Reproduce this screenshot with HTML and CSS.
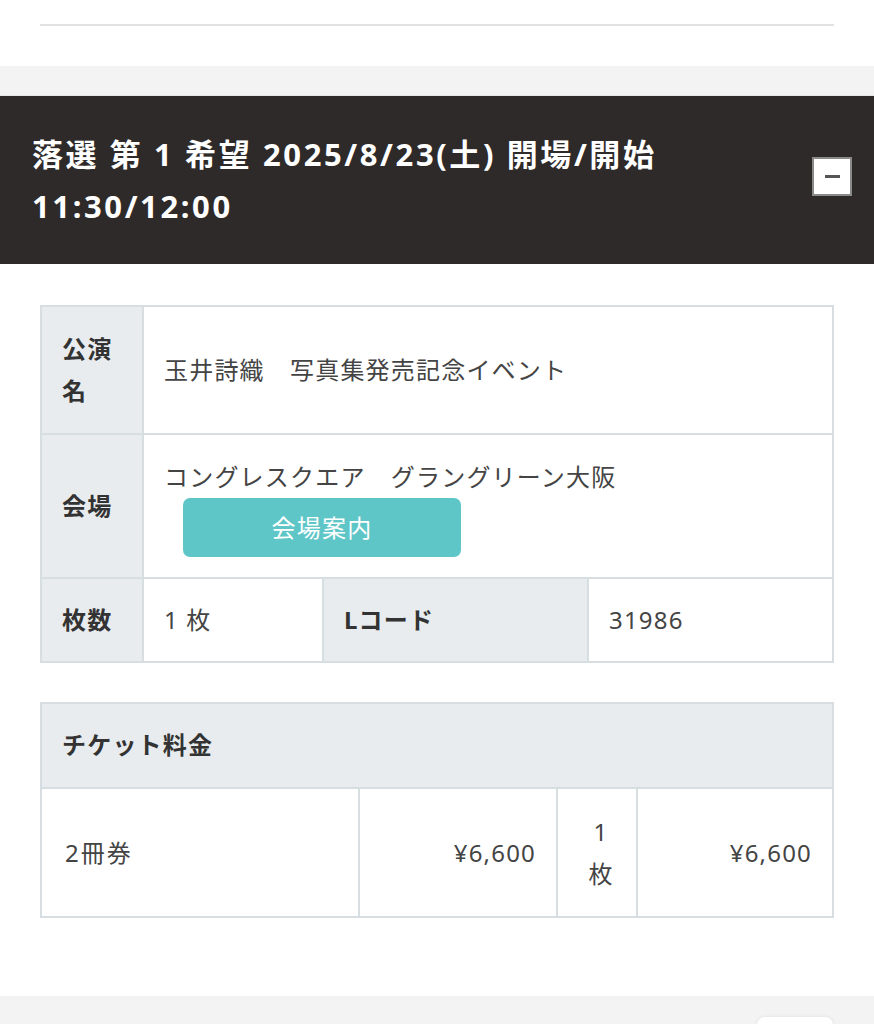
FILE: index.html
```html
<!DOCTYPE html>
<html lang="ja">
<head>
  <meta charset="UTF-8" />
  <meta name="viewport" content="width=device-width, initial-scale=1.0"/>
  <title>抽選結果</title>
  <link rel="stylesheet" href="styles.css">
</head>
<body>
  <div class="top-area">
    <hr class="top-line">
  </div>
  <div class="gray-gap"></div>

  <section class="lottery">
    <div class="lottery-head">
      <h2 class="lottery-title">落選 第 1 希望 2025/8/23(土) 開場/開始 11:30/12:00</h2>
      <button class="toggle-btn" type="button" aria-label="閉じる"><span class="toggle-bar"></span></button>
    </div>

    <div class="lottery-body">
      <table class="info-table">
        <colgroup>
          <col style="width:102px">
          <col style="width:180px">
          <col style="width:265px">
          <col>
        </colgroup>
        <tr class="row-name">
          <th>公演<br>名</th>
          <td colspan="3">玉井詩織　写真集発売記念イベント</td>
        </tr>
        <tr class="row-venue">
          <th>会場</th>
          <td colspan="3">
            コングレスクエア　グラングリーン大阪
            <a class="venue-btn" href="#">会場案内</a>
          </td>
        </tr>
        <tr class="row-count">
          <th>枚数</th>
          <td>1 枚</td>
          <th>Lコード</th>
          <td>31986</td>
        </tr>
      </table>

      <table class="price-table">
        <colgroup>
          <col style="width:318px">
          <col style="width:198px">
          <col style="width:80px">
          <col>
        </colgroup>
        <tr>
          <th colspan="4">チケット料金</th>
        </tr>
        <tr>
          <td class="kind">2冊券</td>
          <td class="num">¥6,600</td>
          <td class="qty">1<br>枚</td>
          <td class="num">¥6,600</td>
        </tr>
      </table>
    </div>
  </section>

  <div class="bottom-bar">
    <span class="bottom-btn"></span>
  </div>
</body>
</html>
```

FILE: styles.css
```css
body {
  font-family: "Noto Sans", "Noto Sans CJK JP", sans-serif;
  background-color: #fff;
  margin: 0;
  padding: 0;
  color: #444;
}

.top-area {
  height: 66px;
  padding: 24px 40px 0;
  box-sizing: border-box;
}

.top-line {
  margin: 0;
  border: none;
  border-top: 2px solid #e2e2e2;
}

.gray-gap {
  height: 29px;
  background-color: #f3f3f3;
  border-bottom: 1px solid #e6e6e6;
}

.lottery-head {
  display: flex;
  align-items: center;
  justify-content: space-between;
  background-color: #2e2a29;
  height: 168px;
  box-sizing: border-box;
  padding: 0 22px 0 32px;
}

.lottery-title {
  margin: 0;
  max-width: 720px;
  color: #fff;
  font-size: 31px;
  font-weight: bold;
  line-height: 52px;
  letter-spacing: 2.6px;
}

.toggle-btn {
  width: 40px;
  height: 39px;
  margin-top: -8px;
  padding: 0;
  background-color: #fff;
  border: 2px solid #8a8a8a;
  display: flex;
  align-items: center;
  justify-content: center;
}

.toggle-bar {
  display: block;
  width: 15px;
  height: 3px;
  background-color: #555;
}

.lottery-body {
  padding: 41px 40px 78px;
}

table {
  width: 100%;
  border-collapse: collapse;
  table-layout: fixed;
}

th, td {
  border: 2px solid #d6dee1;
  padding: 21px 20px;
  font-size: 24px;
  line-height: 42px;
  letter-spacing: 1.2px;
  text-align: left;
  vertical-align: middle;
}

th {
  background-color: #e8ecee;
  color: #333;
  font-weight: bold;
}

td {
  color: #444;
  font-weight: normal;
}

.row-venue td {
  padding-bottom: 20px;
}

.row-count th,
.row-count td {
  padding-top: 20px;
  padding-bottom: 20px;
}

.venue-btn {
  display: block;
  width: 278px;
  height: 59px;
  margin-left: 19px;
  border-radius: 7px;
  background-color: #5fc6c8;
  color: #fff;
  text-align: center;
  line-height: 59px;
  text-decoration: none;
}

.price-table {
  margin-top: 39px;
}

.price-table th {
  padding: 20px 20px 21px;
}

.price-table td {
  height: 85px;
}

.price-table .kind {
  padding-left: 23px;
  letter-spacing: 2px;
}

.price-table .num {
  text-align: right;
}

.price-table .qty {
  text-align: center;
  padding: 20px 0 20px 8px;
}

.bottom-bar {
  height: 28px;
  background-color: #f3f3f3;
  position: relative;
  overflow: hidden;
}

.bottom-btn {
  position: absolute;
  left: 757px;
  top: 21px;
  width: 76px;
  height: 20px;
  background-color: #fff;
  border-radius: 8px;
  box-shadow: 0 0 4px rgba(0,0,0,0.08);
}
```
